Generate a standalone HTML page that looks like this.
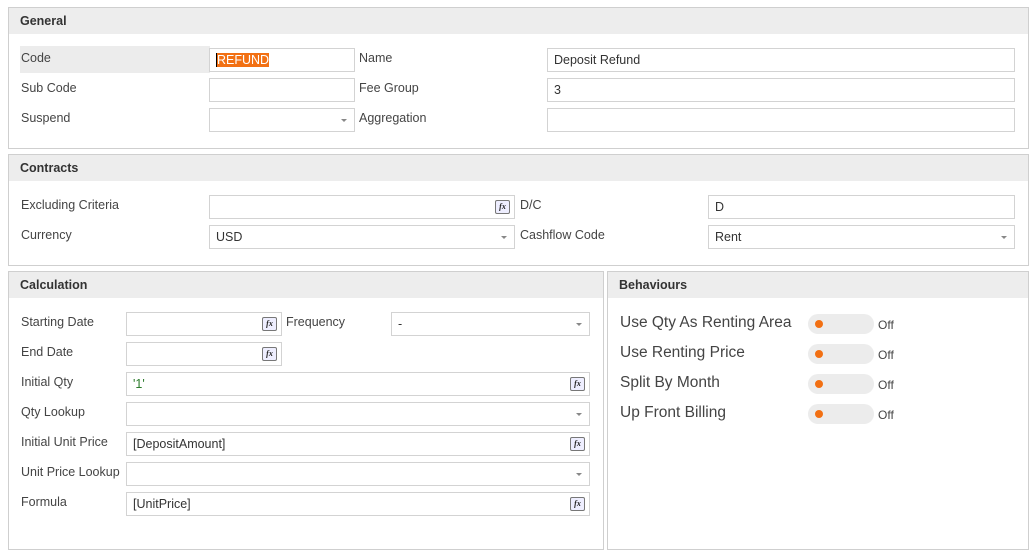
<!DOCTYPE html><html><head><style>
body{margin:0;width:1033px;height:553px;background:#fff;font-family:"Liberation Sans",sans-serif;color:#444;position:relative;overflow:hidden}
.p{position:absolute;border:1px solid #cfcfcf;box-sizing:border-box}
.h{height:26px;background:#ededed;font-weight:bold;font-size:12.5px;color:#333;padding:0 0 0 11px;line-height:26px}
.a{position:absolute}
.l{position:absolute;font-size:12.5px;color:#444}
.i{position:absolute;height:24px;border:1px solid #d3d3d3;box-sizing:border-box;font-size:12.5px;line-height:22px;padding-left:6px;color:#333;background:#fff}
.dd:after{content:"";position:absolute;right:7px;top:10px;border-left:3px solid transparent;border-right:3px solid transparent;border-top:3px solid #888}
.fx{position:absolute;right:4px;top:4px;width:13px;height:12px;border:1px solid #777;border-radius:2px;background:#eef;font:italic bold 8px "Liberation Serif",serif;line-height:12px;text-align:center;color:#222}
.bl{position:absolute;left:620px;font-size:15.5px;color:#444}
.t{position:absolute;left:808px;width:66px;height:20px;border-radius:10px;background:#ececec}
.t:before{content:"";position:absolute;left:7px;top:6px;width:8px;height:8px;border-radius:50%;background:#f27013}
.o{position:absolute;left:878px;font-size:12px;color:#444}
</style></head><body>
<div class="p" style="left:8px;top:7px;width:1021px;height:142px"><div class="h">General</div></div>
<div class="a" style="left:20px;top:46px;width:190px;height:27px;background:#ececec"></div>
<div class="l" style="left:21px;top:51px">Code</div>
<div class="l" style="left:21px;top:81px">Sub Code</div>
<div class="l" style="left:21px;top:111px">Suspend</div>
<div class="i" style="left:209px;top:48px;width:146px"><span style="background:#f27013;color:#fff;border-left:1px solid #000">REFUND</span></div>
<div class="i" style="left:209px;top:78px;width:146px"></div>
<div class="i dd" style="left:209px;top:108px;width:146px"></div>
<div class="l" style="left:359px;top:51px">Name</div>
<div class="l" style="left:359px;top:81px">Fee Group</div>
<div class="l" style="left:359px;top:111px">Aggregation</div>
<div class="i" style="left:547px;top:48px;width:468px">Deposit Refund</div>
<div class="i" style="left:547px;top:78px;width:468px">3</div>
<div class="i" style="left:547px;top:108px;width:468px"></div>

<div class="p" style="left:8px;top:154px;width:1021px;height:112px"><div class="h">Contracts</div></div>
<div class="l" style="left:21px;top:198px">Excluding Criteria</div>
<div class="l" style="left:21px;top:228px">Currency</div>
<div class="i" style="left:209px;top:195px;width:306px"><span class="fx">fx</span></div>
<div class="i dd" style="left:209px;top:225px;width:306px">USD</div>
<div class="l" style="left:520px;top:198px">D/C</div>
<div class="l" style="left:520px;top:228px">Cashflow Code</div>
<div class="i" style="left:708px;top:195px;width:307px">D</div>
<div class="i dd" style="left:708px;top:225px;width:307px">Rent</div>

<div class="p" style="left:8px;top:271px;width:596px;height:279px"><div class="h">Calculation</div></div>
<div class="l" style="left:21px;top:315px">Starting Date</div>
<div class="l" style="left:21px;top:345px">End Date</div>
<div class="l" style="left:21px;top:375px">Initial Qty</div>
<div class="l" style="left:21px;top:405px">Qty Lookup</div>
<div class="l" style="left:21px;top:435px">Initial Unit Price</div>
<div class="l" style="left:21px;top:465px">Unit Price Lookup</div>
<div class="l" style="left:21px;top:495px">Formula</div>
<div class="i" style="left:126px;top:312px;width:156px"><span class="fx">fx</span></div>
<div class="i" style="left:126px;top:342px;width:156px"><span class="fx">fx</span></div>
<div class="l" style="left:286px;top:315px">Frequency</div>
<div class="i dd" style="left:391px;top:312px;width:199px">-</div>
<div class="i" style="left:126px;top:372px;width:464px;color:#2a7a2a">'1'<span class="fx">fx</span></div>
<div class="i dd" style="left:126px;top:402px;width:464px"></div>
<div class="i" style="left:126px;top:432px;width:464px">[DepositAmount]<span class="fx">fx</span></div>
<div class="i dd" style="left:126px;top:462px;width:464px"></div>
<div class="i" style="left:126px;top:492px;width:464px">[UnitPrice]<span class="fx">fx</span></div>

<div class="p" style="left:607px;top:271px;width:422px;height:279px"><div class="h">Behaviours</div></div>
<div class="bl" style="top:314px">Use Qty As Renting Area</div>
<div class="bl" style="top:344px">Use Renting Price</div>
<div class="bl" style="top:374px">Split By Month</div>
<div class="bl" style="top:404px">Up Front Billing</div>
<div class="t" style="top:314px"></div><div class="t" style="top:344px"></div><div class="t" style="top:374px"></div><div class="t" style="top:404px"></div>
<div class="o" style="top:318px">Off</div><div class="o" style="top:348px">Off</div><div class="o" style="top:378px">Off</div><div class="o" style="top:408px">Off</div>
</body></html>
